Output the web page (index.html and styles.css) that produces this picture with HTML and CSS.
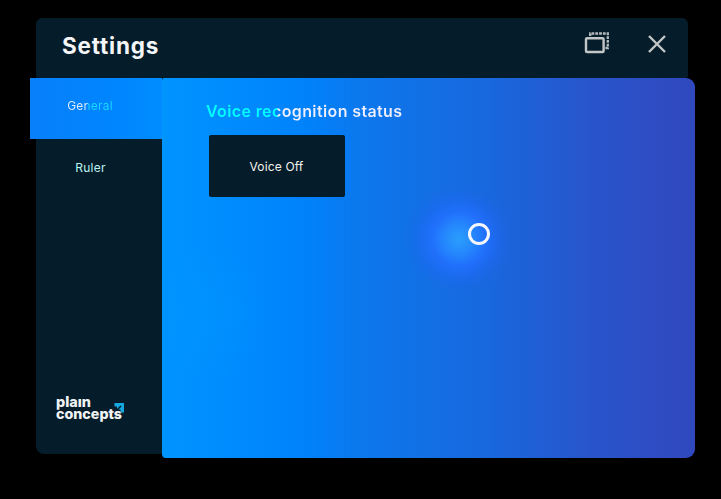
FILE: index.html
```html
<!DOCTYPE html>
<html lang="en">
<head>
<meta charset="utf-8">
<title>Settings</title>
<link rel="stylesheet" href="styles.css">
</head>
<body>
<main class="window">
  <header class="titlebar">
    <h1 class="title">Settings</h1>
    <div class="actions">
      <svg class="icon-follow" viewBox="0 0 26 24" width="26" height="24">
        <rect x="2" y="7.2" width="17.6" height="13.8" rx="1" fill="none" stroke="#c3c6c7" stroke-width="2.4"/>
        <path d="M6.2 5V2.5H23.8V17H21" fill="none" stroke="#b5babc" stroke-width="2.3" stroke-dasharray="2.8 1"/>
      </svg>
      <svg class="icon-close" viewBox="0 0 20 20" width="20" height="20">
        <path d="M2 2L18 18M18 2L2 18" fill="none" stroke="#c3c6c7" stroke-width="2.4"/>
      </svg>
    </div>
  </header>
  <div class="body">
    <nav class="sidebar">
      <div class="tab tab-active"><span class="tab-text lit">General</span></div>
      <div class="tab"><span class="tab-text ruler">Ruler</span></div>
      <svg class="logo" viewBox="0 0 72 34" width="72" height="34">
        <g class="logo-text">
          <text x="1" y="14.5" textLength="35" lengthAdjust="spacingAndGlyphs">plaın</text>
          <text x="1" y="27" textLength="66" lengthAdjust="spacingAndGlyphs">concepts</text>
        </g>
        <path d="M59.5 11H69V20.5H65.5V17.5H62V14.5H59.5Z" fill="#14a9e0"/>
        <path d="M61.5 18.5L66 14" stroke="#051c2a" stroke-width="1.6"/>
      </svg>
    </nav>
    <section class="panel">
      <h2 class="heading">Voice recognition status</h2>
      <button class="voice"><span>Voice Off</span></button>
      <div class="cursor"></div>
    </section>
  </div>
</main>
</body>
</html>
```
FILE: styles.css
```css
* { box-sizing: border-box; }
body {
  margin: 0;
  background: #000;
  font-family: Inter, "Liberation Sans", sans-serif;
  color: #f3f5f7;
  overflow: hidden;
}
.window { width: 659px; margin: 18px 0 0 36px; }
.titlebar {
  width: 652px;
  height: 60px;
  display: flex;
  justify-content: space-between;
  padding: 0 21px 0 26px;
  background: #051c2a;
  border-radius: 6px 6px 2px 2px;
}
.title {
  margin: 14px 0 0;
  font-size: 22.5px;
  line-height: 28px;
  font-weight: 650;
  letter-spacing: 0.8px;
}
.actions { display: flex; gap: 37px; padding-top: 13px; }
.icon-close { margin-top: 3px; }
.body { display: flex; align-items: flex-start; }
.sidebar {
  width: 126px;
  height: 376px;
  display: flex;
  flex-direction: column;
  background: #051c2a;
  border-radius: 0 0 0 8px;
}
.tab {
  height: 61px;
  display: flex;
  justify-content: center;
  padding-top: 20px;
  font-size: 12px;
  line-height: 16px;
}
.tab-active {
  margin-left: -6px;
  padding: 20px 12px 0 0;
  background: linear-gradient(90deg, #0880fa, #0085ff 60%, #008cff);
}
.tab-text { height: 16px; letter-spacing: 0.2px; }
.lit {
  background: linear-gradient(90deg, #e9efff 42%, #18d9ff 47%);
  background-clip: text;
  color: transparent;
}
.ruler { margin: 1px 17px 0 0; color: #b9f4f0; letter-spacing: 0.25px; }
.logo { margin: auto 0 28px 19px; }
.logo-text {
  font-size: 14px;
  font-weight: 800;
  fill: #f0f3f4;
}
.panel {
  position: relative;
  width: 533px;
  height: 380px;
  padding: 21px 0 0 44px;
  border-radius: 2px 9px 9px 4px;
  background:
    radial-gradient(circle 56px at 297px 161px, #2b9dfc 0, rgba(38,142,254,.95) 22%, rgba(34,112,255,.9) 48%, rgba(32,104,248,.45) 70%, rgba(30,100,240,.1) 88%, rgba(30,100,240,0) 100%),
    radial-gradient(circle 75px at 28px 235px, rgba(0,148,255,.8), rgba(0,148,255,0)),
    linear-gradient(90deg, #0094ff 0, #0082fb 27%, #0d77ec 38%, #1967dd 62%, #2855cc 80%, #3148be 100%);
}
.heading {
  width: max-content;
  margin: 0;
  font-size: 16px;
  line-height: 24px;
  font-weight: 600;
  letter-spacing: 0.38px;
  background: linear-gradient(90deg, #0ff 36%, #f0f0ff 37%);
  background-clip: text;
  color: transparent;
}
.voice {
  display: flex;
  width: 136px;
  height: 62px;
  margin: 12px 0 0 3px;
  padding: 0 1px 0 0;
  border: 0;
  border-radius: 2px;
  align-items: center;
  justify-content: center;
  background: #051c2a;
  color: #f4f4ee;
  font: 12px Inter, sans-serif;
  letter-spacing: 0.15px;
}
.cursor {
  position: absolute;
  left: 306px;
  top: 145px;
  width: 22px;
  height: 22px;
  border: 3.5px solid #f7f8ff;
  border-radius: 50%;
}
```
